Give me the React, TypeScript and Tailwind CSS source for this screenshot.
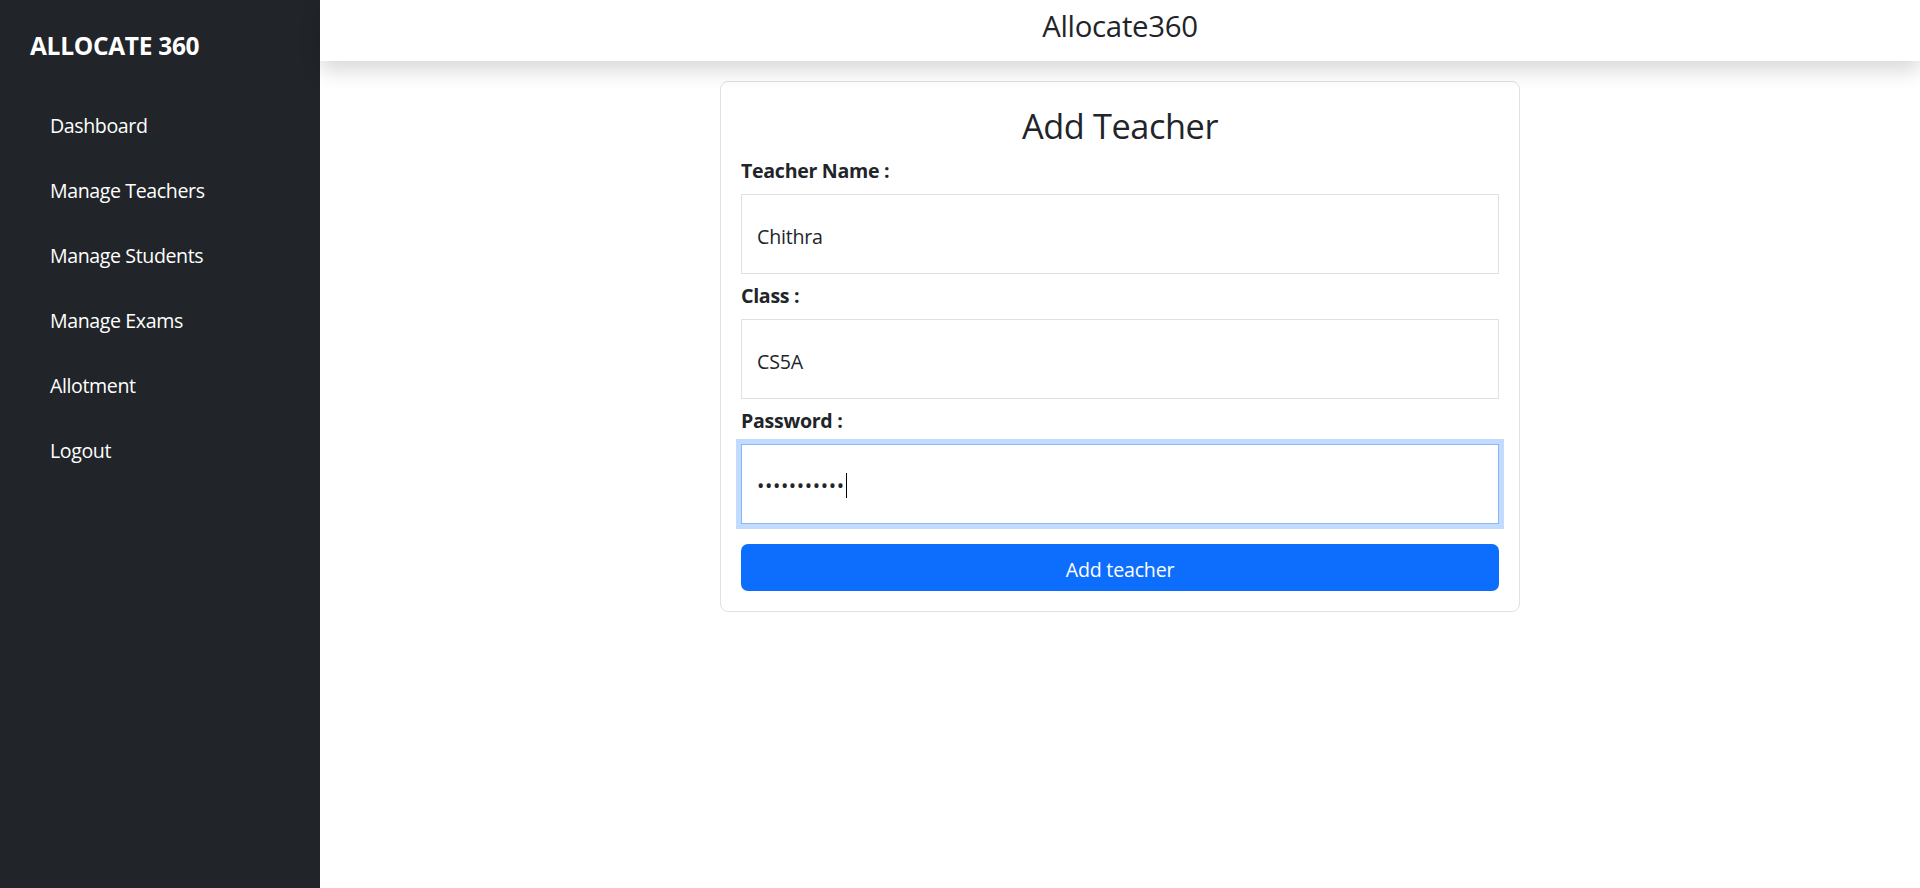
import { useState } from "react";

const navItems = ["Dashboard", "Manage Teachers", "Manage Students", "Manage Exams", "Allotment", "Logout"];

function Field({ label, value }: { label: string; value: string }) {
  return (
    <div className="mb-[6px]">
      <label className="block font-bold text-[19.6px] leading-[29px] tracking-[-0.3px] pt-[1px] mb-[9px]">{label}</label>
      <input
        type="text"
        defaultValue={value}
        className="block w-full h-[80px] border border-[#dee2e6] bg-white px-[15px] pt-[5px] text-[19.6px] text-[#212529] tracking-[-0.2px] outline-none"
      />
    </div>
  );
}

export default function App() {
  const [name] = useState("Chithra");

  return (
    <div className="flex min-h-screen bg-white text-[#212529]" style={{ fontFamily: '"Open Sans", "Noto Sans", sans-serif' }}>
      <aside className="w-[320px] shrink-0 bg-[#212529] text-white">
        <div className="pl-[30px] pt-[29px] text-[24.5px] font-bold leading-[34px] tracking-[-0.3px]">ALLOCATE 360</div>
        <nav className="mt-[48px] flex flex-col">
          {navItems.map(item => (
            <a key={item} href="#" className="pl-[50px] h-[65px] text-[19.6px] leading-[29px] tracking-[-0.4px] text-white">
              {item}
            </a>
          ))}
        </nav>
      </aside>

      <main className="flex-1 flex flex-col">
        <header className="relative z-10 h-[61px] bg-white shadow-[0_10px_20px_rgba(0,0,0,0.15)] text-center pt-[9px]">
          <h3 className="text-[29.4px] leading-[35px] font-medium tracking-[-0.3px]">Allocate360</h3>
        </header>

        <div className="mt-[20px] mx-auto w-[800px] border border-[#dee2e6] rounded-[8px] p-[20px]">
          <h2 className="text-center text-[34.3px] leading-[41px] font-medium tracking-[-0.4px] pt-[3px] mb-[9px]">Add Teacher</h2>

          <Field label="Teacher Name :" value={name} />
          <Field label="Class :" value="CS5A" />

          <div>
            <label className="block font-bold text-[19.6px] leading-[29px] tracking-[-0.3px] pt-[1px] mb-[9px]">Password :</label>
            <div className="flex items-center w-full h-[80px] border border-[#86b7fe] bg-white px-[15px] pt-[3px] shadow-[0_0_0_5px_rgba(13,110,253,0.25)]">
              <span className="text-[19.6px] leading-[29px] tracking-[0.6px]">•••••••••••</span>
              <span className="ml-[1px] w-[1px] h-[25px] bg-black" />
            </div>
          </div>

          <button className="mt-[20px] w-full h-[47px] rounded-[7px] bg-[#0d6efd] text-white text-[19.6px] leading-[29px] tracking-[-0.2px] pt-[3px]">
            Add teacher
          </button>
        </div>
      </main>
    </div>
  );
}
